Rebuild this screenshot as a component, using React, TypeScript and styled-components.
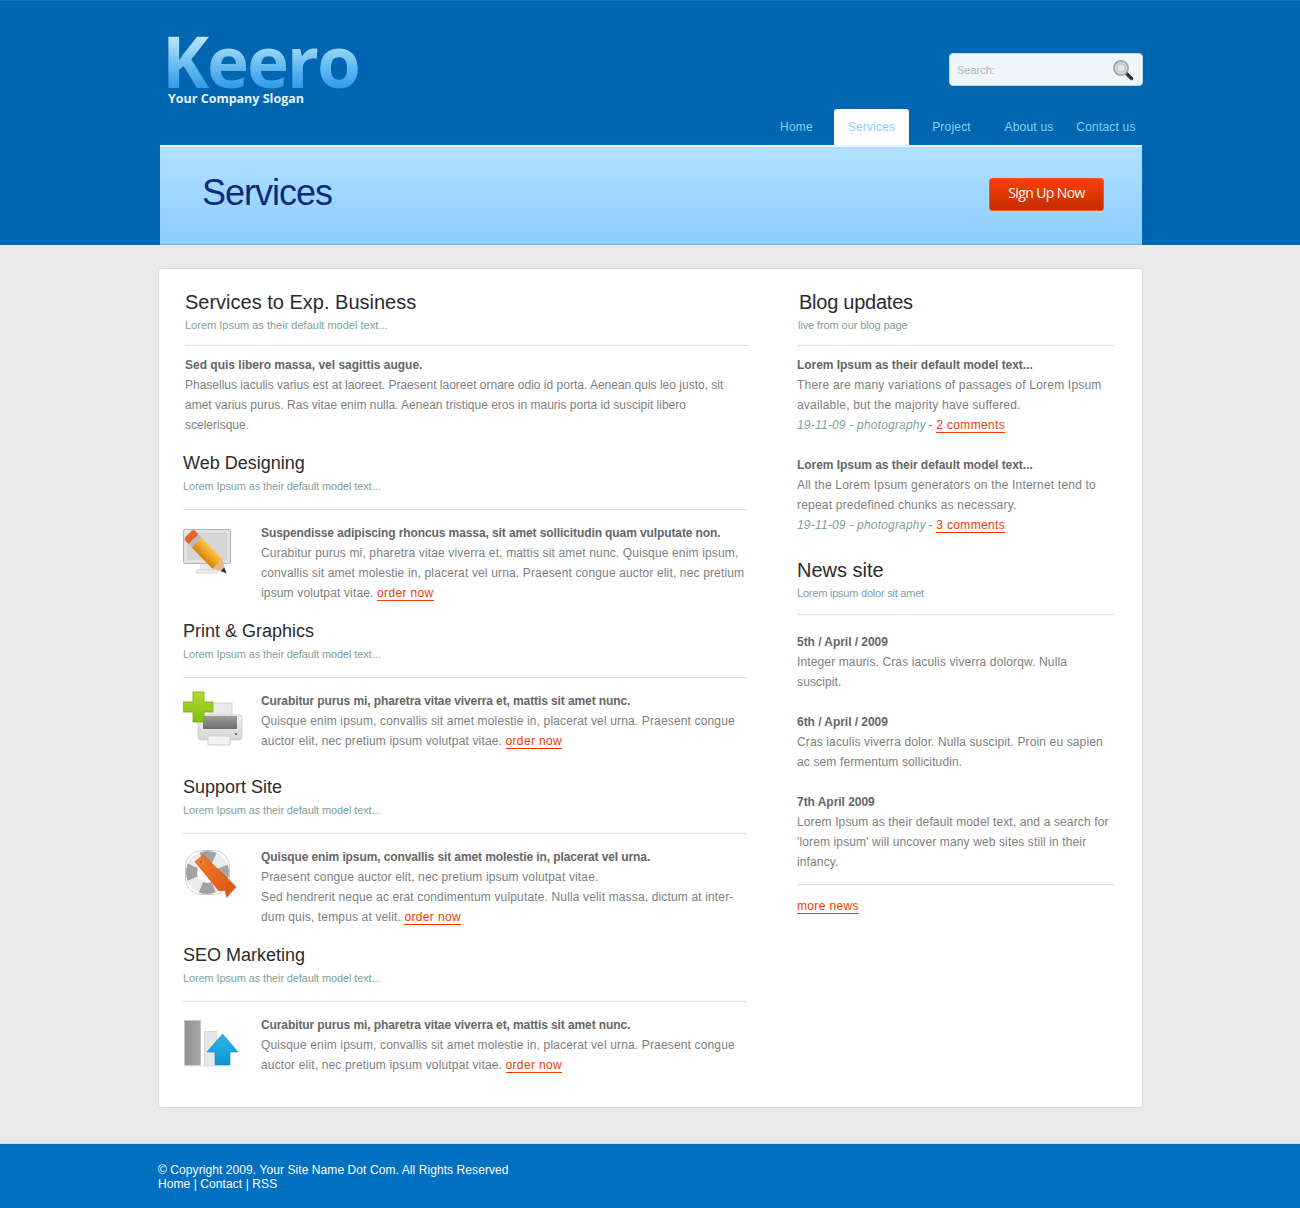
import React from "react";
import styled, { createGlobalStyle } from "styled-components";

const GlobalStyle = createGlobalStyle`
  html, body {
    margin: 0;
    padding: 0;
    background: #e9e9e9;
    font-family: "Liberation Sans", Arial, sans-serif;
  }
`;

const Header = styled.header`
  height: 245px;
  box-sizing: border-box;
  background: #0066b1;
  border-top: 1px solid #1a74b6;
`;

const HeaderInner = styled.div`
  width: 982px;
  margin-left: 160px;
`;

const TopRow = styled.div`
  display: flex;
  justify-content: space-between;
  height: 108px;
`;

const Logo = styled.div`
  margin: 23px 0 0 2px;
`;

const LogoName = styled.div`
  font-family: "Open Sans", sans-serif;
  font-weight: 700;
  font-size: 71px;
  line-height: 74px;
  height: 74px;
  letter-spacing: -2.1px;
  background: linear-gradient(180deg, #bfe6fb 18%, #6fc0f2 52%, #2f96ea 89%);
  -webkit-background-clip: text;
  background-clip: text;
  color: transparent;
`;

const Slogan = styled.div`
  font-family: "Open Sans", sans-serif;
  font-weight: 700;
  font-size: 12.5px;
  line-height: 16px;
  margin: -7px 0 0 6px;
  color: #e6f3fc;
`;

const SearchBox = styled.div`
  display: flex;
  align-items: center;
  justify-content: space-between;
  box-sizing: border-box;
  width: 194px;
  height: 33px;
  margin: 52px -1px 0 0;
  padding: 0 8px 0 7px;
  background: #eef6fa;
  border: 1px solid #bcd6e6;
  border-radius: 4px;
  font-size: 11px;
  color: #a9b7bb;
`;

const Nav = styled.nav`
  display: flex;
  justify-content: flex-end;
  margin-right: -6px;
  height: 36px;
`;

const NavItem = styled.a<{ $width: number; $active?: boolean }>`
  display: block;
  box-sizing: border-box;
  width: ${(p) => p.$width}px;
  padding-top: 11px;
  text-align: center;
  font-size: 12px;
  line-height: 14px;
  letter-spacing: 0.2px;
  color: #7fd3f7;
  background: ${(p) => (p.$active ? "#ffffff" : "transparent")};
  border-radius: ${(p) => (p.$active ? "3px 3px 0 0" : "0")};
`;

const Banner = styled.div`
  display: flex;
  align-items: center;
  justify-content: space-between;
  box-sizing: border-box;
  height: 100px;
  padding: 0 38px 0 42px;
  border-top: 2px solid #e2f2fd;
  border-bottom: 1px solid #6fb7ec;
  background: linear-gradient(180deg, #b3e0ff 0%, #8ccdfd 100%);
`;

const BannerTitle = styled.h1`
  margin: 0 0 6px;
  font-weight: 400;
  font-size: 36px;
  line-height: 44px;
  letter-spacing: -1px;
  color: #0b2c7c;
`;

const SignUp = styled.a`
  display: block;
  box-sizing: border-box;
  width: 115px;
  height: 33px;
  margin-top: -3px;
  border: 1px solid #ea5a2a;
  border-radius: 3px;
  background: linear-gradient(180deg, #f83f00 0%, #c32d00 100%);
  text-align: center;
  font-family: "Open Sans", sans-serif;
  font-size: 14px;
  line-height: 27px;
  letter-spacing: -0.6px;
  color: #ffffff;
`;

const Card = styled.main`
  display: flex;
  box-sizing: border-box;
  width: 985px;
  margin: 23px 0 35px 158px;
  padding: 21px 28px 24px 24px;
  background: #ffffff;
  border: 1px solid #dcdcdc;
  border-radius: 3px;
`;

const LeftColumn = styled.div`
  width: 564px;
  margin-right: 50px;
`;

const RightColumn = styled.aside`
  width: 317px;
`;

const Intro = styled.section`
  margin: 0 -3px 16px 2px;
`;

const Title = styled.h2<{ $indent?: number; $size?: number; $spacing?: number }>`
  margin: 0 0 1px ${(p) => p.$indent ?? 0}px;
  font-weight: 400;
  font-size: ${(p) => p.$size ?? 20}px;
  line-height: 24px;
  letter-spacing: ${(p) => p.$spacing ?? 0}px;
  color: #2b2b2b;
`;

const Subtitle = styled.div<{ $gap: number; $indent?: number; $spacing?: number }>`
  margin: 0 0 ${(p) => p.$gap}px ${(p) => p.$indent ?? 0}px;
  font-size: 11px;
  line-height: 20px;
  letter-spacing: ${(p) => p.$spacing ?? 0}px;
  color: #7f9f99;
`;

const Copy = styled.div<{ $top: number }>`
  border-top: 1px solid #dddddd;
  padding-top: ${(p) => p.$top}px;
`;

const Text = styled.p<{ $spacing?: number }>`
  margin: 0;
  font-size: 12px;
  line-height: 20px;
  letter-spacing: ${(p) => p.$spacing ?? 0.2}px;
  color: #7e7e7e;
`;

const Lead = styled.strong<{ $spacing?: number }>`
  display: block;
  font-weight: 700;
  letter-spacing: ${(p) => p.$spacing ?? -0.04}px;
  color: #666666;
`;

const Service = styled.section`
  margin-bottom: 16px;

  &:last-child {
    margin-bottom: 0;
  }
`;

const ServiceRow = styled.div`
  display: flex;
  min-height: 68px;
`;

const IconSlot = styled.div`
  flex: 0 0 78px;
`;

const ServiceText = styled(Text)`
  flex: 1;
`;

const OrderLink = styled.a`
  letter-spacing: 0.35px;
  color: #f03a00;
  border-bottom: 1px solid #f03a00;
`;

const Meta = styled.em`
  margin-right: -1px;
  color: #7f9f99;
`;

const Post = styled.div`
  margin-bottom: 20px;

  &:last-child {
    margin-bottom: 0;
  }
`;

const NewsBlock = styled.div`
  margin-top: 23px;
`;

const MoreNews = styled.div`
  margin-top: 12px;
  padding-top: 11px;
  border-top: 1px solid #dddddd;
  font-size: 12px;
  line-height: 20px;
`;

const Footer = styled.footer`
  box-sizing: border-box;
  height: 65px;
  padding: 19px 0 0 158px;
  background: #0070c0;
  border-top: 1px solid #c9dcea;
  font-size: 12px;
  line-height: 14px;
  letter-spacing: 0.08px;
  color: #ffffff;
`;

const Icon = styled.svg`
  display: block;
  width: 62px;
  height: 62px;
`;

const SearchIcon = () => (
  <svg width="22" height="22" viewBox="0 0 22 22">
    <line x1="14" y1="14" x2="19.5" y2="19.5" stroke="#333" strokeWidth="3.4" strokeLinecap="round" />
    <circle cx="9" cy="9" r="7" fill="#e2e6e6" stroke="#a9acac" strokeWidth="2" />
    <circle cx="9" cy="9" r="4.2" fill="none" stroke="#c4c8c8" strokeWidth="1.6" />
  </svg>
);

const MonitorIcon = () => (
  <Icon viewBox="0 0 62 62">
    <defs>
      <linearGradient id="pencilBody" x1="0" y1="0" x2="0" y2="1">
        <stop offset="0" stopColor="#fbc84a" />
        <stop offset="1" stopColor="#d9820a" />
      </linearGradient>
    </defs>
    <rect x="0.5" y="6.5" width="47" height="34" rx="1" fill="#dedede" stroke="#b5b5b5" />
    <rect x="3" y="9" width="42" height="29" fill="#d6d6d6" stroke="#ececec" />
    <rect x="17" y="41" width="14" height="6" fill="#e8e8e8" />
    <rect x="13" y="47" width="22" height="3" rx="1" fill="#f2f2f2" stroke="#bdbdbd" strokeWidth="0.6" />
    <g transform="translate(5.500 11) rotate(46)">
      <rect x="0" y="-7" width="9" height="14" rx="3.500" fill="#e8602c" />
      <rect x="7" y="-7" width="5" height="14" fill="#b9b9b9" />
      <rect x="12" y="-7" width="30" height="14" fill="url(#pencilBody)" />
      <polygon points="42,-7 53,0 42,7" fill="#e3b98c" />
      <polygon points="49,-2.500 55,0 49,2.500" fill="#33302e" />
    </g>
  </Icon>
);

const PrinterIcon = () => (
  <Icon viewBox="0 0 62 62">
    <defs>
      <linearGradient id="printerBody" x1="0" y1="0" x2="0" y2="1">
        <stop offset="0" stopColor="#f2f2f2" />
        <stop offset="1" stopColor="#d4d4d4" />
      </linearGradient>
      <linearGradient id="printerSlot" x1="0" y1="0" x2="0" y2="1">
        <stop offset="0" stopColor="#9b9b9b" />
        <stop offset="1" stopColor="#6f6f6f" />
      </linearGradient>
      <linearGradient id="plusGreen" x1="0" y1="0" x2="0" y2="1">
        <stop offset="0" stopColor="#b4dc2c" />
        <stop offset="1" stopColor="#86bc12" />
      </linearGradient>
    </defs>
    <rect x="26" y="12" width="23" height="15" fill="#e9e9e9" stroke="#d4d4d4" />
    <rect x="15" y="24" width="44" height="25" rx="3" fill="url(#printerBody)" stroke="#cfcfcf" />
    <rect x="20" y="25" width="34" height="13" fill="url(#printerSlot)" />
    <circle cx="53" cy="43" r="1" fill="#555" />
    <rect x="25" y="45" width="22" height="9" fill="#f3f3f3" stroke="#cdcdcd" />
    <polygon
      points="10,1 21,1 21,11 30,11 30,21 21,21 21,31 10,31 10,21 0,21 0,11 10,11"
      fill="url(#plusGreen)"
      stroke="#78a80e"
      strokeWidth="0.8"
    />
  </Icon>
);

const RingIcon = () => (
  <Icon viewBox="0 0 62 62">
    <defs>
      <linearGradient id="ribbon" x1="0" y1="0" x2="1" y2="1">
        <stop offset="0" stopColor="#f47c2c" />
        <stop offset="1" stopColor="#d9530c" />
      </linearGradient>
    </defs>
    <rect x="2.500" y="3.500" width="44" height="44" rx="16" fill="#ffffff" stroke="#cfcfcf" />
    <circle cx="24.500" cy="25.500" r="16" fill="none" stroke="#ececec" strokeWidth="11" />
    <circle
      cx="24.500"
      cy="25.500"
      r="16"
      fill="none"
      stroke="#a2a2a2"
      strokeWidth="11"
      strokeDasharray="13 12.130"
      strokeDashoffset="6.500"
    />
    <polygon points="12,14.700 20.300,8 53,39.700 43.700,50.300 42,43 36,44" fill="url(#ribbon)" stroke="#c84c0a" strokeWidth="0.6" />
    <circle cx="18" cy="15" r="2" fill="#a8623a" stroke="#f7a56c" strokeWidth="0.6" />
  </Icon>
);

const BarsIcon = () => (
  <Icon viewBox="0 0 62 62">
    <defs>
      <linearGradient id="barDark" x1="0" y1="0" x2="1" y2="0">
        <stop offset="0" stopColor="#8f8f8f" />
        <stop offset="1" stopColor="#a8a8a8" />
      </linearGradient>
      <linearGradient id="arrowBlue" x1="0" y1="0" x2="0" y2="1">
        <stop offset="0" stopColor="#2eb6ea" />
        <stop offset="1" stopColor="#0f94d2" />
      </linearGradient>
    </defs>
    <rect x="1.500" y="5.500" width="16" height="45" fill="url(#barDark)" stroke="#c4c4c4" />
    <rect x="21.500" y="16.500" width="12" height="34" fill="#e7e7e7" stroke="#d8d8d8" />
    <rect x="1" y="50.500" width="54" height="1" fill="#e8e8e8" />
    <polygon points="39.500,19 55,37 47,37 47,50 32,50 32,37 24,37" fill="url(#arrowBlue)" stroke="#0c88c4" strokeWidth="0.6" />
  </Icon>
);

const services = [
  {
    title: "Web Designing",
    icon: <MonitorIcon />,
    lead: "Suspendisse adipiscing rhoncus massa, sit amet sollicitudin quam vulputate non.",
    lines: [
      "Curabitur purus mi, pharetra vitae viverra et, mattis sit amet nunc. Quisque enim ipsum, convallis sit amet molestie in, placerat vel urna. Praesent congue auctor elit, nec pretium ipsum volutpat vitae.",
    ],
  },
  {
    title: "Print & Graphics",
    icon: <PrinterIcon />,
    lead: "Curabitur purus mi, pharetra vitae viverra et, mattis sit amet nunc.",
    lines: [
      "Quisque enim ipsum, convallis sit amet molestie in, placerat vel urna. Praesent congue auctor elit, nec pretium ipsum volutpat vitae.",
    ],
  },
  {
    title: "Support Site",
    icon: <RingIcon />,
    lead: "Quisque enim ipsum, convallis sit amet molestie in, placerat vel urna.",
    lines: [
      "Praesent congue auctor elit, nec pretium ipsum volutpat vitae.",
      "Sed hendrerit neque ac erat condimentum vulputate. Nulla velit massa, dictum at inter-dum quis, tempus at velit.",
    ],
  },
  {
    title: "SEO Marketing",
    icon: <BarsIcon />,
    lead: "Curabitur purus mi, pharetra vitae viverra et, mattis sit amet nunc.",
    lines: [
      "Quisque enim ipsum, convallis sit amet molestie in, placerat vel urna. Praesent congue auctor elit, nec pretium ipsum volutpat vitae.",
    ],
  },
];

const blogPosts = [
  {
    text: "There are many variations of passages of Lorem Ipsum available, but the majority have suffered.",
    comments: "2 comments",
  },
  {
    text: "All the Lorem Ipsum generators on the Internet tend to repeat predefined chunks as necessary.",
    comments: "3 comments",
  },
];

const news = [
  { date: "5th / April / 2009", text: "Integer mauris. Cras iaculis viverra dolorqw. Nulla suscipit." },
  { date: "6th / April / 2009", text: "Cras iaculis viverra dolor. Nulla suscipit. Proin eu sapien ac sem fermentum sollicitudin." },
  {
    date: "7th April 2009",
    text: "Lorem Ipsum as their default model text, and a search for 'lorem ipsum' will uncover many web sites still in their infancy.",
  },
];

const navItems = [
  { label: "Home", width: 75 },
  { label: "Services", width: 75, active: true },
  { label: "Project", width: 85 },
  { label: "About us", width: 70 },
  { label: "Contact us", width: 84 },
];

const App = () => {
  return (
    <>
      <GlobalStyle />
      <Header>
        <HeaderInner>
          <TopRow>
            <Logo>
              <LogoName>Keero</LogoName>
              <Slogan>Your Company Slogan</Slogan>
            </Logo>
            <SearchBox>
              Search:
              <SearchIcon />
            </SearchBox>
          </TopRow>
          <Nav>
            {navItems.map((item) => (
              <NavItem key={item.label} $width={item.width} $active={item.active}>
                {item.label}
              </NavItem>
            ))}
          </Nav>
          <Banner>
            <BannerTitle>Services</BannerTitle>
            <SignUp>Sign Up Now</SignUp>
          </Banner>
        </HeaderInner>
      </Header>

      <Card>
        <LeftColumn>
          <Intro>
            <Title>Services to Exp. Business</Title>
            <Subtitle $gap={10}>Lorem Ipsum as their default model text...</Subtitle>
            <Copy $top={9}>
              <Text $spacing={0}>
                <Lead $spacing={0}>Sed quis libero massa, vel sagittis augue.</Lead>
                Phasellus iaculis varius est at laoreet. Praesent laoreet ornare odio id porta. Aenean quis leo justo, sit amet
                varius purus. Ras vitae enim nulla. Aenean tristique eros in mauris porta id suscipit libero scelerisque.
              </Text>
            </Copy>
          </Intro>

          {services.map((service) => (
            <Service key={service.title}>
              <Title $size={18}>{service.title}</Title>
              <Subtitle $gap={13} $spacing={-0.12}>Lorem Ipsum as their default model text...</Subtitle>
              <Copy $top={13}>
                <ServiceRow>
                  <IconSlot>{service.icon}</IconSlot>
                  <ServiceText $spacing={0.15}>
                    <Lead $spacing={-0.1}>{service.lead}</Lead>
                    {service.lines.map((line, index) => (
                      <React.Fragment key={line}>
                        {index > 0 && <br />}
                        {line}
                      </React.Fragment>
                    ))}{" "}
                    <OrderLink>order now</OrderLink>
                  </ServiceText>
                </ServiceRow>
              </Copy>
            </Service>
          ))}
        </LeftColumn>

        <RightColumn>
          <Title $indent={2} $spacing={-0.25}>Blog updates</Title>
          <Subtitle $gap={10} $indent={1} $spacing={-0.1}>live from our blog page</Subtitle>
          <Copy $top={9}>
            {blogPosts.map((post) => (
              <Post key={post.comments}>
                <Text>
                  <Lead>Lorem Ipsum as their default model text...</Lead>
                  {post.text}
                  <br />
                  <Meta>19-11-09 - photography</Meta> - <OrderLink>{post.comments}</OrderLink>
                </Text>
              </Post>
            ))}
          </Copy>

          <NewsBlock>
            <Title>News site</Title>
            <Subtitle $gap={11} $spacing={-0.22}>Lorem ipsum dolor sit amet</Subtitle>
            <Copy $top={17}>
              {news.map((item) => (
                <Post key={item.date}>
                  <Text $spacing={0.13}>
                    <Lead>{item.date}</Lead>
                    {item.text}
                  </Text>
                </Post>
              ))}
            </Copy>
            <MoreNews>
              <OrderLink>more news</OrderLink>
            </MoreNews>
          </NewsBlock>
        </RightColumn>
      </Card>

      <Footer>
        © Copyright 2009. Your Site Name Dot Com. All Rights Reserved
        <br />
        Home | Contact | RSS
      </Footer>
    </>
  );
};

export default App;
